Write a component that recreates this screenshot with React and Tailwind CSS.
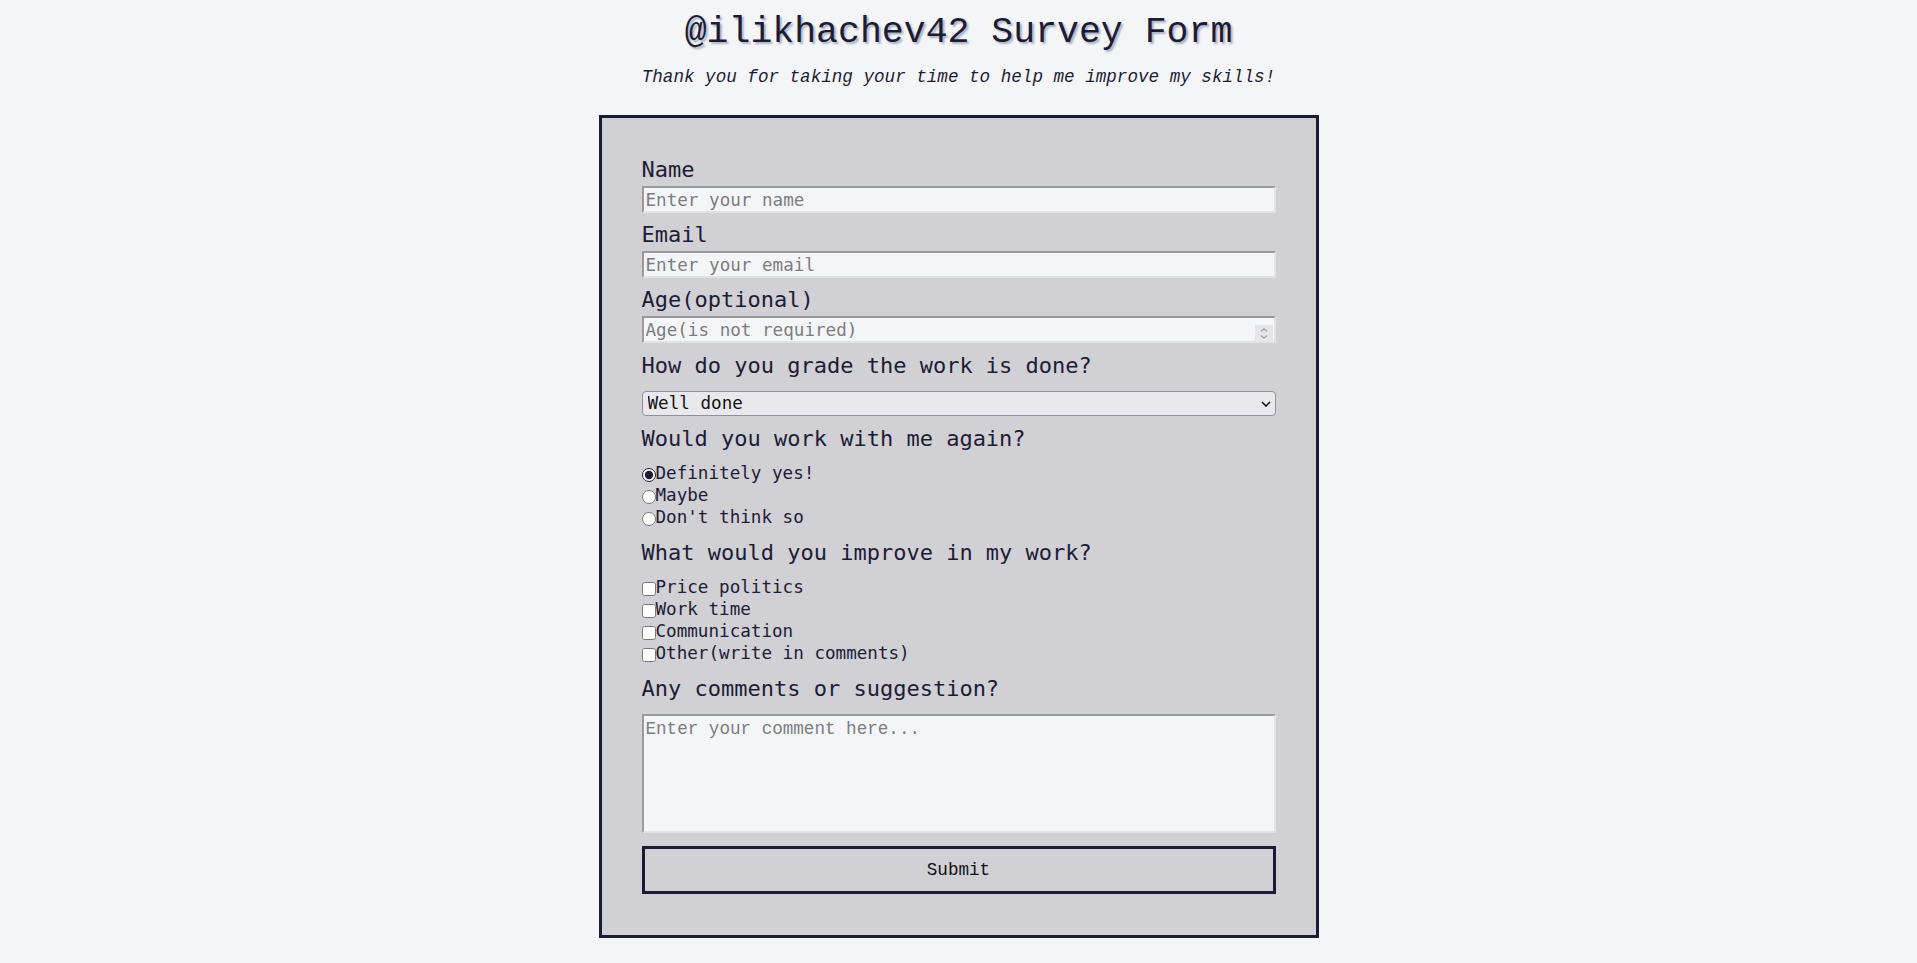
import React, { useState } from "react";

const inputClass =
  "mt-1 block h-[27px] w-full border-2 border-t-[#9a9a9a] border-l-[#9a9a9a] border-r-[#e2e2e2] border-b-[#e2e2e2] bg-[#f4f5f7] px-[2px] text-[17.6px] leading-[21px] text-[#1d1c35] placeholder:text-[#7d7c82] outline-none";

const questionClass = "block pt-[1px] text-[22px] leading-[25px]";

const again = ["Definitely yes!", "Maybe", "Don't think so"];
const improve = [
  "Price politics",
  "Work time",
  "Communication",
  "Other(write in comments)",
];

export default function App() {
  const [answer, setAnswer] = useState("Definitely yes!");

  return (
    <div className="min-h-screen bg-[#f4f5f7] font-['DejaVu_Sans_Mono',monospace] text-[#1d1c35]">
      <header className="pt-[11px] text-center">
        <h1 className="font-['Liberation_Mono',monospace] text-[36.5px] leading-[44px] [text-shadow:2px_2px_2px_#aab0c2]">
          @ilikhachev42 Survey Form
        </h1>
        <p className="mt-[9px] font-['Liberation_Mono',monospace] text-[17.6px] italic leading-[26px]">
          Thank you for taking your time to help me improve my skills!
        </p>
      </header>

      <form
        className="mx-auto mt-[25px] w-[720px] border-[3px] border-[#1c1b33] bg-[#d1d0d5] px-10 pb-[41px] pt-[38px]"
        onSubmit={(e) => e.preventDefault()}
      >
        <label className={questionClass} htmlFor="name">
          Name
        </label>
        <input id="name" type="text" placeholder="Enter your name" className={inputClass} />

        <label className={questionClass + " mt-[8px]"} htmlFor="email">
          Email
        </label>
        <input id="email" type="email" placeholder="Enter your email" className={inputClass} />

        <label className={questionClass + " mt-[8px]"} htmlFor="age">
          Age(optional)
        </label>
        <div className="relative">
          <input
            id="age"
            type="number"
            placeholder="Age(is not required)"
            className={
              inputClass +
              " [appearance:textfield] [&::-webkit-inner-spin-button]:appearance-none [&::-webkit-outer-spin-button]:appearance-none"
            }
          />
          <div className="pointer-events-none absolute right-[3px] top-[9px] flex h-[17px] w-[18px] items-center justify-center bg-[#e4e4e9]">
            <svg width="10" height="13" viewBox="0 0 10 13" fill="none">
              <path d="M2 4.5 5 1.8 8 4.5" stroke="#9d9da6" strokeWidth="1.2" />
              <path d="M2 8.5 5 11.2 8 8.5" stroke="#9d9da6" strokeWidth="1.2" />
            </svg>
          </div>
        </div>

        <p className={questionClass + " mt-[9px]"}>How do you grade the work is done?</p>
        <div className="relative mt-[13px]">
          <select
            defaultValue="Well done"
            className="block h-[25px] w-full appearance-none rounded-[4px] border border-[#8f8f9d] bg-[#e9e8ed] pl-[5px] text-[17.6px] leading-[21px] text-[#111]"
          >
            <option>Well done</option>
            <option>Could be better</option>
            <option>Bad</option>
          </select>
          <svg
            className="pointer-events-none absolute right-[5px] top-[10px]"
            width="10"
            height="6"
            viewBox="0 0 10 6"
            fill="none"
          >
            <path d="M1 1 5 5 9 1" stroke="#111" strokeWidth="1.6" />
          </svg>
        </div>

        <p className={questionClass + " mt-[9px]"}>Would you work with me again?</p>
        <div className="mt-[11px]">
          {again.map((item) => (
            <label key={item} className="flex h-[22px] items-center text-[17.6px]">
              <input
                type="radio"
                name="again"
                checked={answer === item}
                onChange={() => setAnswer(item)}
                className="m-0 h-[14px] w-[14px] translate-y-[2px] accent-[#1c1b33]"
              />
              {item}
            </label>
          ))}
        </div>

        <p className={questionClass + " mt-[11px]"}>What would you improve in my work?</p>
        <div className="mt-[11px]">
          {improve.map((item) => (
            <label key={item} className="flex h-[22px] items-center text-[17.6px]">
              <input
                type="checkbox"
                className="m-0 h-[14px] w-[14px] translate-y-[2px] accent-[#1c1b33]"
              />
              {item}
            </label>
          ))}
        </div>

        <p className={questionClass + " mt-[11px]"}>Any comments or suggestion?</p>
        <textarea
          placeholder="Enter your comment here..."
          className="mt-[13px] block h-[119px] w-full resize-none border-2 border-t-[#9a9a9a] border-l-[#9a9a9a] border-r-[#e2e2e2] border-b-[#e2e2e2] bg-[#f4f5f7] px-[2px] py-[2px] font-['Liberation_Mono',monospace] text-[17.6px] leading-[22px] placeholder:text-[#7d7c82] outline-none"
        />

        <button
          type="submit"
          className="mt-[13px] block h-[48px] w-full border-[3px] border-[#1c1b33] bg-transparent font-['Liberation_Mono',monospace] text-[17.6px] text-[#111]"
        >
          Submit
        </button>
      </form>
    </div>
  );
}
